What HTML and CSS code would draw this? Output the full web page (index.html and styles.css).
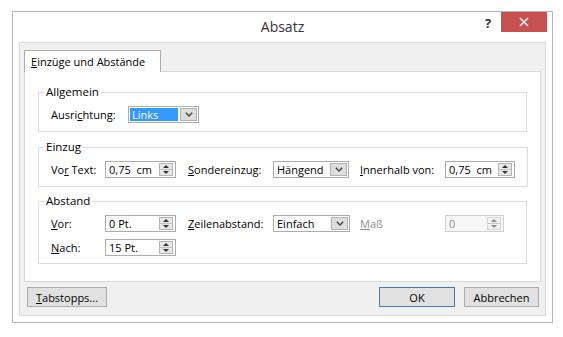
FILE: index.html
```html
<!DOCTYPE html>
<html lang="de">
<head>
  <meta charset="UTF-8">
  <meta name="viewport" content="width=device-width, initial-scale=1.0">
  <title>Absatz</title>
  <link rel="stylesheet" href="styles.css">
</head>
<body>
  <div class="dialog">
    <!-- Title bar -->
    <div class="titlebar">
      <span class="title">Absatz</span>
      <div class="controls">
        <span class="help">?</span>
        <span class="close">
          <svg width="10" height="10" viewBox="0 0 10 10"><path d="M1 1 L9 9 M9 1 L1 9" stroke="#fff" stroke-width="1.4"/></svg>
        </span>
      </div>
    </div>

    <div class="client">
      <div class="tabs">
        <div class="tab"><u>E</u>inzüge und Abstände</div>
      </div>

      <div class="panel">
        <!-- Allgemein -->
        <fieldset class="group">
          <legend>Allgemein</legend>
          <div class="row row-general">
            <span class="lbl">Ausri<u>c</u>htung:</span>
            <div class="select w-align">
              <span class="value selected">Links</span>
              <span class="arrow"><svg width="8" height="5" viewBox="0 0 8 5"><path d="M0.8 0.8 L4 4 L7.2 0.8" fill="none" stroke="#444" stroke-width="1.4"/></svg></span>
            </div>
          </div>
        </fieldset>

        <!-- Einzug -->
        <fieldset class="group">
          <legend>Einzug</legend>
          <div class="row row-grid">
            <span class="lbl">Vo<u>r</u> Text:</span>
            <div class="spin w-num">
              <span class="value">0,75  cm</span>
              <span class="spinner"><span class="up"></span><span class="down"></span></span>
            </div>
            <span class="lbl"><u>S</u>ondereinzug:</span>
            <div class="select w-special">
              <span class="value">Hängend</span>
              <span class="arrow"><svg width="8" height="5" viewBox="0 0 8 5"><path d="M0.8 0.8 L4 4 L7.2 0.8" fill="none" stroke="#444" stroke-width="1.4"/></svg></span>
            </div>
            <span class="lbl"><u>I</u>nnerhalb von:</span>
            <div class="spin w-inner">
              <span class="value">0,75  cm</span>
              <span class="spinner"><span class="up"></span><span class="down"></span></span>
            </div>
          </div>
        </fieldset>

        <!-- Abstand -->
        <fieldset class="group">
          <legend>Abstand</legend>
          <div class="row row-grid">
            <span class="lbl"><u>V</u>or:</span>
            <div class="spin w-num">
              <span class="value">0 Pt.</span>
              <span class="spinner"><span class="up"></span><span class="down"></span></span>
            </div>
            <span class="lbl"><u>Z</u>eilenabstand:</span>
            <div class="select w-line">
              <span class="value">Einfach</span>
              <span class="arrow"><svg width="8" height="5" viewBox="0 0 8 5"><path d="M0.8 0.8 L4 4 L7.2 0.8" fill="none" stroke="#444" stroke-width="1.4"/></svg></span>
            </div>
            <span class="lbl disabled"><u>M</u>aß</span>
            <div class="spin w-measure disabled">
              <span class="value">0</span>
              <span class="spinner"><span class="up"></span><span class="down"></span></span>
            </div>
          </div>
          <div class="row row-grid">
            <span class="lbl"><u>N</u>ach:</span>
            <div class="spin w-num">
              <span class="value">15 Pt.</span>
              <span class="spinner"><span class="up"></span><span class="down"></span></span>
            </div>
          </div>
        </fieldset>
      </div>

      <!-- Buttons -->
      <div class="buttons">
        <button class="btn btn-tabs"><u>T</u>abstopps...</button>
        <div class="btn-right">
          <button class="btn btn-default">OK</button>
          <button class="btn">Abbrechen</button>
        </div>
      </div>
    </div>
  </div>
</body>
</html>
```

FILE: styles.css
```css
/* General */
* {
  margin: 0;
  padding: 0;
  box-sizing: border-box;
}

body {
  font-family: "Open Sans", "Noto Sans", sans-serif;
  font-size: 11px;
  color: #000;
  background-color: #fff;
}

u {
  text-decoration: underline;
  text-underline-offset: 1px;
}

/* Window */
.dialog {
  margin: 11px 0 0 12px;
  width: 541px;
  height: 312px;
  border: 1px solid #b4b4b4;
  background-color: #fff;
  display: flex;
  flex-direction: column;
}

.titlebar {
  height: 30px;
  flex-shrink: 0;
  display: grid;
  grid-template-columns: 1fr auto 1fr;
}

.title {
  grid-column: 2;
  font-size: 14px;
  line-height: 30px;
  color: #333;
}

.controls {
  grid-column: 3;
  justify-self: end;
  display: flex;
  align-items: flex-start;
  padding-right: 5px;
}

.help {
  width: 14px;
  margin-right: 6px;
  margin-top: 2px;
  text-align: center;
  font-size: 13px;
  font-weight: bold;
  color: #333;
}

.close {
  width: 46px;
  height: 20px;
  background-color: #c75050;
  display: flex;
  align-items: center;
  justify-content: center;
}

/* Client area */
.client {
  flex: 1;
  margin: 0 6px 6px 6px;
  padding: 7px 4px 0 4px;
  background-color: #f0f0f0;
  border: 1px solid #dadada;
}

.tabs {
  display: flex;
}

.tab {
  position: relative;
  z-index: 1;
  width: 137px;
  height: 22px;
  margin-bottom: -1px;
  padding-left: 6px;
  line-height: 21px;
  background-color: #fff;
  border: 1px solid #acacac;
  border-bottom: none;
}

.panel {
  height: 211px;
  padding: 12px 13px 0 13px;
  background-color: #fff;
  border: 1px solid #d9d9d9;
}

/* Groups */
.group {
  border: 1px solid #dcdcdc;
  padding: 0 12px 8px 12px;
  margin-bottom: 7px;
}

.group:nth-child(3) {
  margin-top: -1px;
  padding-bottom: 7px;
}

.group legend {
  margin-left: -7px;
  padding: 0 2px;
  line-height: 16px;
  font-size: 11.5px;
}

.row {
  display: grid;
  align-items: center;
  height: 17px;
  margin-top: 6px;
}

.row + .row {
  margin-top: 7px;
}

.row-general {
  grid-template-columns: 77px auto;
}

.row-grid {
  grid-template-columns: 54px 83px 85px 87px 85px auto;
}

.lbl {
  white-space: nowrap;
}

.lbl.disabled {
  color: #8d8d8d;
}

/* Fields */
.select,
.spin {
  display: flex;
  height: 17px;
  background-color: #fff;
  border: 1px solid #acacac;
}

.value {
  flex: 1;
  padding-left: 3px;
  line-height: 15px;
  white-space: pre;
}

.value.selected {
  margin: 1px;
  padding-left: 2px;
  line-height: 13px;
  background-color: #3399ff;
  color: #fff;
}

.arrow {
  width: 17px;
  margin: 1px;
  background-color: #dedede;
  border: 1px solid #b2b2b2;
  display: flex;
  align-items: center;
  justify-content: center;
}

.spinner {
  width: 14px;
  margin: 1px 2px 1px 0;
  background-color: #e8e8e8;
  border: 1px solid #b4b4b4;
  display: flex;
  flex-direction: column;
}

.spinner .up,
.spinner .down {
  flex: 1;
  display: flex;
  align-items: center;
  justify-content: center;
}

.spinner .up {
  border-bottom: 1px solid #c4c4c4;
}

.spinner .up::before {
  content: "";
  border-left: 3px solid transparent;
  border-right: 3px solid transparent;
  border-bottom: 3px solid #333;
}

.spinner .down::before {
  content: "";
  border-left: 3px solid transparent;
  border-right: 3px solid transparent;
  border-top: 3px solid #333;
}

.spin.disabled {
  background-color: #f7f7f7;
  border-color: #cfcfcf;
  color: #8d8d8d;
}

.spin.disabled .spinner {
  background-color: #f2f2f2;
  border-color: #d6d6d6;
}

.spin.disabled .spinner .up::before {
  border-bottom-color: #8d8d8d;
}

.spin.disabled .spinner .down::before {
  border-top-color: #8d8d8d;
}

.w-align { width: 71px; }
.w-num { width: 71px; }
.w-special { width: 76px; }
.w-line { width: 77px; }
.w-inner { width: 70px; }
.w-measure { width: 59px; }

/* Buttons */
.buttons {
  display: flex;
  justify-content: space-between;
  margin-top: 5px;
  padding: 0 2px 0 3px;
}

.btn-right {
  display: flex;
  gap: 9px;
}

.btn {
  height: 20px;
  width: 75px;
  font-family: inherit;
  font-size: 11px;
  color: #000;
  background-color: #e1e1e1;
  border: 1px solid #adadad;
}

.btn-tabs {
  width: 80px;
}

.btn-default {
  width: 76px;
  border-color: #3c7fb1;
}
```
